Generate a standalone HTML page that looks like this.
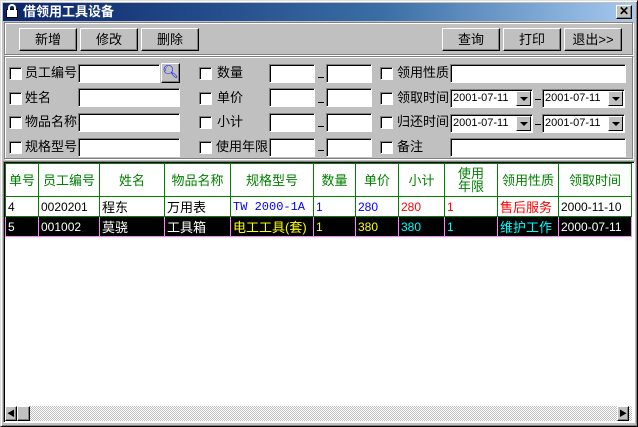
<!DOCTYPE html>
<html><head><meta charset="utf-8"><style>
*{box-sizing:border-box;margin:0;padding:0}
body{width:638px;height:427px;background:#c0c0c0;font-family:"Liberation Sans","WenQuanYi Zen Hei","Noto Sans CJK SC",sans-serif;font-size:12px;position:relative;overflow:hidden}
.a{position:absolute}
.win{left:0;top:0;width:638px;height:427px;border:1px solid;border-color:#dfdfdf #000 #000 #dfdfdf;box-shadow:inset 1px 1px #fff,inset -1px -1px #808080}
.title{left:3px;top:3px;width:632px;height:18px;background:linear-gradient(90deg,#0a246a,#3a6ea5 60%,#a6caf0);color:#fff;font-weight:bold;font-size:13px;line-height:18px;padding-left:20px}
.grp{border:1px solid #808080;box-shadow:1px 1px #fff,inset 1px 1px #fff}
.btn{background:#c0c0c0;border:1px solid;border-color:#fff #000 #000 #fff;box-shadow:inset -1px -1px #808080;text-align:center;line-height:21px;font-size:13px}
.cb{width:13px;height:13px;background:#fff;border:1px solid;border-color:#808080 #fff #fff #808080;box-shadow:inset 1px 1px #000}
.lb{font-size:13px;line-height:16px}
.in{background:#fff;border:1px solid;border-color:#808080 #fff #fff #808080;box-shadow:inset 1px 1px #000}
.dd{font-size:11px;line-height:16px;padding-left:2px;letter-spacing:0}
.arr{position:absolute;right:1px;top:1px;width:15px;height:15px;background:#c0c0c0;border:1px solid;border-color:#fff #000 #000 #fff}
.arr:after{content:"";position:absolute;left:3px;top:5px;border:4px solid transparent;border-top:4px solid #000;border-bottom:0}
.grid{left:3px;top:161px;width:632px;height:262px;background:#fff;border:1px solid;border-color:#808080 #fff #fff #808080;box-shadow:inset 1px 1px #000}
table{border-collapse:collapse;position:absolute;left:5px;top:163px;table-layout:fixed}
td{border:1px solid #008000;font-size:12px;white-space:nowrap;overflow:hidden;padding-left:2px}
.h td{color:#008000;text-align:center;height:33px;font-size:13px;padding:0;line-height:13px}
.r1 td{height:16px;background:#fff}
.r2 td{height:16px;background:#000;color:#fff;border-color:#ff80ff}
.dash{width:6px;height:1px;background:#000}
</style></head><body>
<div class="a win"></div>
<div class="a title">借领用工具设备</div>
<div class="a" style="left:6px;top:9px;width:12px;height:9px;background:#fff;border:1px solid #000"></div>
<div class="a" style="left:8px;top:4px;width:8px;height:7px;border:2px solid #fff;border-bottom:0;border-radius:4px 4px 0 0"></div>
<div class="a btn" style="left:616px;top:5px;width:16px;height:14px;line-height:11px;font-size:12px;font-weight:bold">✕</div>
<div class="a grp" style="left:4px;top:22px;width:629px;height:33px"></div>
<div class="a btn" style="left:19px;top:28px;width:58px;height:23px">新增</div>
<div class="a btn" style="left:80px;top:28px;width:58px;height:23px">修改</div>
<div class="a btn" style="left:141px;top:28px;width:58px;height:23px">删除</div>
<div class="a btn" style="left:442px;top:28px;width:58px;height:23px">查询</div>
<div class="a btn" style="left:503px;top:28px;width:58px;height:23px">打印</div>
<div class="a btn" style="left:564px;top:28px;width:58px;height:23px">退出&gt;&gt;</div>
<div class="a grp" style="left:4px;top:56px;width:629px;height:103px"></div>

<div class="a cb" style="left:9px;top:67px"></div><div class="a lb" style="left:25px;top:65px">员工编号</div><div class="a in" style="left:78px;top:64px;width:82px;height:19px"></div>
<div class="a btn" style="left:161px;top:63px;width:19px;height:20px;line-height:16px;color:#00f">🔍︎</div>
<div class="a cb" style="left:9px;top:92px"></div><div class="a lb" style="left:25px;top:90px">姓名</div><div class="a in" style="left:78px;top:88px;width:102px;height:19px"></div>
<div class="a cb" style="left:9px;top:116px"></div><div class="a lb" style="left:25px;top:114px">物品名称</div><div class="a in" style="left:78px;top:113px;width:102px;height:19px"></div>
<div class="a cb" style="left:9px;top:141px"></div><div class="a lb" style="left:25px;top:139px">规格型号</div><div class="a in" style="left:78px;top:138px;width:102px;height:19px"></div>

<div class="a cb" style="left:199px;top:67px"></div><div class="a lb" style="left:217px;top:65px">数量</div>
<div class="a cb" style="left:199px;top:92px"></div><div class="a lb" style="left:217px;top:90px">单价</div>
<div class="a cb" style="left:199px;top:116px"></div><div class="a lb" style="left:217px;top:114px">小计</div>
<div class="a cb" style="left:199px;top:141px"></div><div class="a lb" style="left:216px;top:139px">使用年限</div>
<div class="a in" style="left:269px;top:64px;width:46px;height:19px"></div><div class="a dash" style="left:318px;top:77px"></div><div class="a in" style="left:326px;top:64px;width:46px;height:19px"></div>
<div class="a in" style="left:269px;top:88px;width:46px;height:19px"></div><div class="a dash" style="left:318px;top:102px"></div><div class="a in" style="left:326px;top:88px;width:46px;height:19px"></div>
<div class="a in" style="left:269px;top:113px;width:46px;height:19px"></div><div class="a dash" style="left:318px;top:126px"></div><div class="a in" style="left:326px;top:113px;width:46px;height:19px"></div>
<div class="a in" style="left:269px;top:138px;width:46px;height:19px"></div><div class="a dash" style="left:318px;top:150px"></div><div class="a in" style="left:326px;top:138px;width:46px;height:19px"></div>

<div class="a cb" style="left:380px;top:67px"></div><div class="a lb" style="left:397px;top:65px">领用性质</div><div class="a in" style="left:450px;top:64px;width:176px;height:19px"></div>
<div class="a cb" style="left:380px;top:92px"></div><div class="a lb" style="left:397px;top:90px">领取时间</div>
<div class="a cb" style="left:380px;top:116px"></div><div class="a lb" style="left:397px;top:114px">归还时间</div>
<div class="a cb" style="left:380px;top:141px"></div><div class="a lb" style="left:397px;top:139px">备注</div><div class="a in" style="left:450px;top:138px;width:176px;height:19px"></div>
<div class="a in dd" style="left:450px;top:89px;width:83px;height:19px">2001-07-11<span class="arr"></span></div><div class="a dash" style="left:535px;top:99px"></div>
<div class="a in dd" style="left:542px;top:89px;width:83px;height:19px">2001-07-11<span class="arr"></span></div>
<div class="a in dd" style="left:450px;top:114px;width:83px;height:19px">2001-07-11<span class="arr"></span></div><div class="a dash" style="left:535px;top:124px"></div>
<div class="a in dd" style="left:542px;top:114px;width:83px;height:19px">2001-07-11<span class="arr"></span></div>

<div class="a grid"></div>
<table>
<colgroup><col style="width:33px"><col style="width:61px"><col style="width:65px"><col style="width:66px"><col style="width:83px"><col style="width:42px"><col style="width:43px"><col style="width:46px"><col style="width:53px"><col style="width:61px"><col style="width:73px"></colgroup>
<tr class="h"><td>单号</td><td>员工编号</td><td>姓名</td><td>物品名称</td><td>规格型号</td><td>数量</td><td>单价</td><td>小计</td><td>使用<br>年限</td><td>领用性质</td><td>领取时间</td></tr>
<tr class="r1"><td>4</td><td>0020201</td><td style="font-size:13px">程东</td><td style="font-size:13px">万用表</td><td style="color:#00f;font-family:'Liberation Mono',monospace">TW 2000-1A</td><td style="color:#00f">1</td><td style="color:#00f">280</td><td style="color:#f00">280</td><td style="color:#f00">1</td><td style="color:#f00;font-size:13px">售后服务</td><td>2000-11-10</td></tr>
<tr class="r2"><td>5</td><td>001002</td><td style="font-size:13px">莫骁</td><td style="font-size:13px">工具箱</td><td style="color:#ff0;font-size:13px">电工工具(套)</td><td style="color:#ff0">1</td><td style="color:#ff0">380</td><td style="color:#0ff">380</td><td style="color:#0ff">1</td><td style="color:#0ff;font-size:13px">维护工作</td><td>2000-07-11</td></tr>
</table>
<div class="a" style="left:5px;top:406px;width:627px;height:15px;background-color:#e0e0e0;background-image:repeating-conic-gradient(#c0c0c0 0 25%,#fff 0 50%);background-size:2px 2px"></div>
<div class="a btn" style="left:5px;top:406px;width:12px;height:15px;font-size:8px;line-height:13px">◀</div>
<div class="a btn" style="left:17px;top:406px;width:13px;height:15px"></div>
<div class="a btn" style="left:617px;top:406px;width:12px;height:15px;font-size:8px;line-height:13px">▶</div>
</body></html>
